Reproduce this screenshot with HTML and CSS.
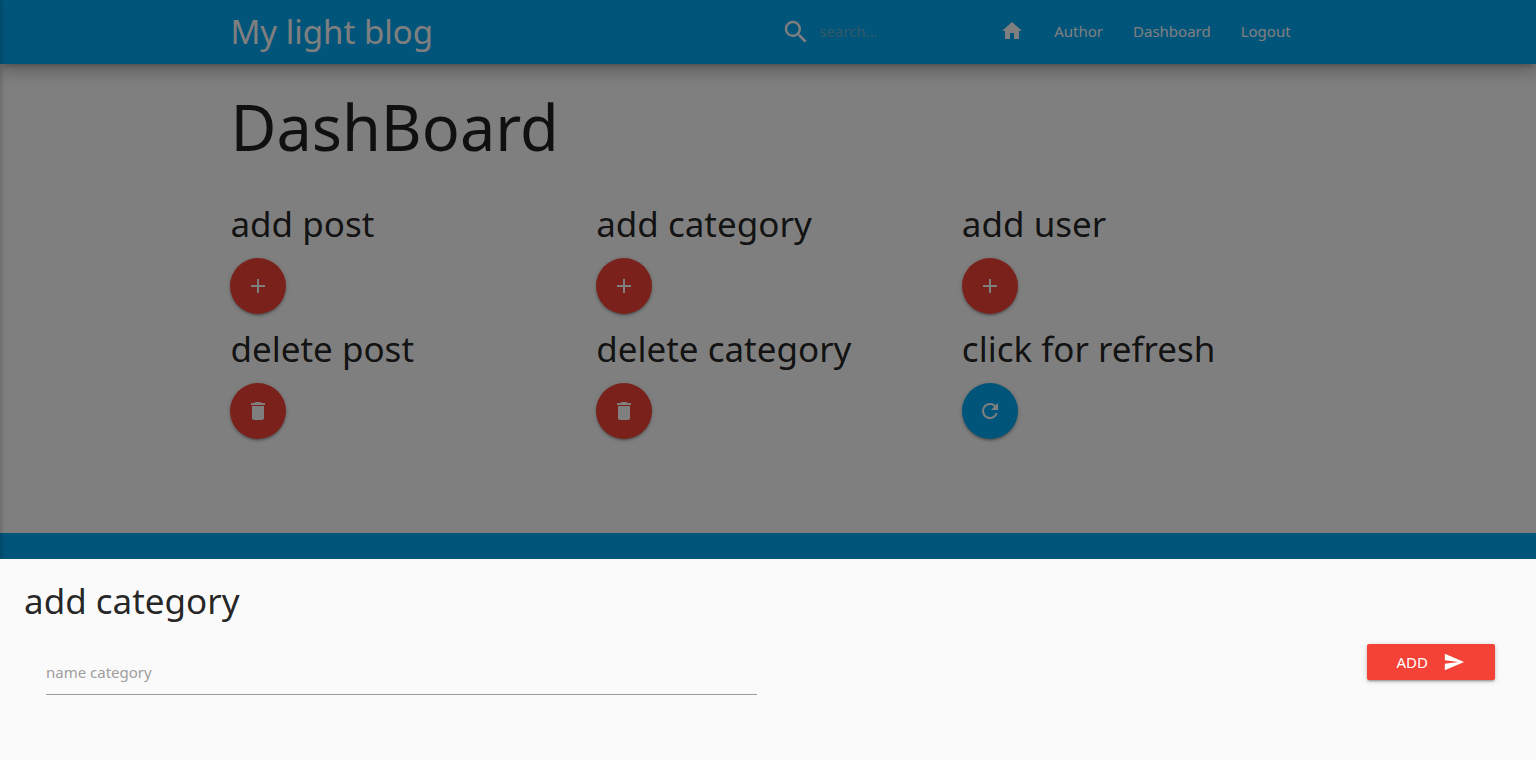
FILE: index.html
```
<!DOCTYPE html>
<html lang="en">
<head>
<meta charset="utf-8">
<meta name="viewport" content="width=device-width, initial-scale=1">
<title>My light blog</title>
<link rel="stylesheet" href="styles.css">
</head>
<body>
<div class="page">
  <header class="navbar">
    <div class="container navbar-inner">
      <a class="brand" href="#">My light blog</a>
      <form class="search">
        <label for="search" aria-label="Search">
          <svg class="icon icon-large" viewBox="0 0 24 24"><path d="M15.5 14h-.79l-.28-.27A6.47 6.47 0 0 0 16 9.5 6.5 6.5 0 1 0 9.5 16c1.61 0 3.09-.59 4.23-1.57l.27.28v.79l5 4.99L20.49 19l-4.99-5zm-6 0C7.01 14 5 11.99 5 9.5S7.01 5 9.5 5 14 7.01 14 9.5 11.99 14 9.5 14z"/></svg>
        </label>
        <input id="search" type="search" placeholder="search...">
      </form>
      <nav class="menu">
        <a href="#" aria-label="Home"><svg class="icon" viewBox="0 0 24 24"><path d="M10 20v-6h4v6h5v-8h3L12 3 2 12h3v8z"/></svg></a>
        <a href="#">Author</a>
        <a href="#">Dashboard</a>
        <a href="#">Logout</a>
      </nav>
    </div>
  </header>

  <main class="container">
    <h1 class="title">DashBoard</h1>
    <div class="actions">
      <section class="action">
        <h2 class="heading">add post</h2>
        <button class="round" type="button" aria-label="add post"><svg class="icon" viewBox="0 0 24 24"><path d="M19 13h-6v6h-2v-6H5v-2h6V5h2v6h6v2z"/></svg></button>
      </section>
      <section class="action">
        <h2 class="heading">add category</h2>
        <button class="round" type="button" aria-label="add category"><svg class="icon" viewBox="0 0 24 24"><path d="M19 13h-6v6h-2v-6H5v-2h6V5h2v6h6v2z"/></svg></button>
      </section>
      <section class="action">
        <h2 class="heading">add user</h2>
        <button class="round" type="button" aria-label="add user"><svg class="icon" viewBox="0 0 24 24"><path d="M19 13h-6v6h-2v-6H5v-2h6V5h2v6h6v2z"/></svg></button>
      </section>
      <section class="action">
        <h2 class="heading">delete post</h2>
        <button class="round" type="button" aria-label="delete post"><svg class="icon" viewBox="0 0 24 24"><path d="M6 19c0 1.1.9 2 2 2h8c1.1 0 2-.9 2-2V7H6v12zM19 4h-3.5l-1-1h-5l-1 1H5v2h14V4z"/></svg></button>
      </section>
      <section class="action">
        <h2 class="heading">delete category</h2>
        <button class="round" type="button" aria-label="delete category"><svg class="icon" viewBox="0 0 24 24"><path d="M6 19c0 1.1.9 2 2 2h8c1.1 0 2-.9 2-2V7H6v12zM19 4h-3.5l-1-1h-5l-1 1H5v2h14V4z"/></svg></button>
      </section>
      <section class="action">
        <h2 class="heading">click for refresh</h2>
        <button class="round round-blue" type="button" aria-label="refresh"><svg class="icon" viewBox="0 0 24 24"><path d="M17.65 6.35A7.96 7.96 0 0 0 12 4a8 8 0 1 0 7.73 10h-2.08A6 6 0 1 1 12 6c1.66 0 3.14.69 4.22 1.78L13 11h7V4l-2.35 2.35z"/></svg></button>
      </section>
    </div>
  </main>
  <footer class="footer"></footer>
</div>
<div class="drawer"></div>
<div class="overlay"></div>

<div class="sheet" role="dialog" aria-labelledby="sheet-title">
  <h2 class="heading" id="sheet-title">add category</h2>
  <form class="sheet-form">
    <div class="field">
      <input id="name" type="text" placeholder="name category" aria-label="name category">
    </div>
    <button class="submit" type="submit">ADD
      <svg class="icon" viewBox="0 0 24 24"><path d="M2.01 21L23 12 2.01 3 2 10l15 2-15 2z"/></svg>
    </button>
  </form>
</div>
</body>
</html>
```
FILE: styles.css
```
* {
  box-sizing: border-box;
}

body {
  margin: 0;
  color: rgba(0, 0, 0, 0.87);
  background: #fff;
  font-family: "Noto Sans", "Open Sans", sans-serif;
  font-size: 15px;
  line-height: 24px;
}

button,
input {
  font: inherit;
}

a {
  color: inherit;
  text-decoration: none;
}

.page {
  display: flex;
  flex-direction: column;
  height: 100vh;
  overflow: hidden;
}

.container {
  width: 70%;
  margin: 0 auto;
}

.icon {
  display: block;
  width: 24px;
  height: 24px;
  fill: currentColor;
}

.icon-large {
  width: 30px;
  height: 30px;
}

.navbar {
  flex: none;
  color: #fff;
  background: #03a9f4;
  box-shadow: 0 8px 17px 2px rgba(0, 0, 0, 0.14), 0 3px 14px 2px rgba(0, 0, 0, 0.12), 0 5px 5px -3px rgba(0, 0, 0, 0.2);
}

.navbar-inner {
  display: flex;
  align-items: center;
  height: 64px;
}

.brand {
  font-size: 33px;
  line-height: 60px;
}

.search {
  display: flex;
  align-items: center;
  gap: 8px;
  margin-left: auto;
}

.search input {
  width: 166px;
  padding: 0 0 2px;
  border: 0;
  outline: 0;
  color: #fff;
  background: none;
}

.search input::placeholder {
  color: #68b2d0;
  opacity: 1;
}

.menu {
  display: flex;
  align-items: center;
  padding-bottom: 2px;
}

.menu a {
  padding: 0 15px;
}

.title {
  margin: 26px 0 40px;
  font-size: 63px;
  font-weight: 400;
  line-height: 74px;
}

.actions {
  display: grid;
  grid-template-columns: repeat(3, 1fr);
  gap: 15px 0;
  margin-right: -22px;
}

.heading {
  margin: 0 0 14px;
  font-size: 35px;
  font-weight: 400;
  line-height: 40px;
}

.round {
  display: grid;
  place-items: center;
  width: 56px;
  height: 56px;
  padding: 0;
  border: 0;
  border-radius: 50%;
  color: #fff;
  background: #f44336;
  box-shadow: 0 2px 2px rgba(0, 0, 0, 0.14), 0 3px 1px -2px rgba(0, 0, 0, 0.12), 0 1px 5px rgba(0, 0, 0, 0.2);
}

.round-blue {
  background: #03a9f4;
}

.footer {
  flex: 1 0 auto;
  margin-top: 94px;
  background: #03a9f4;
}

.drawer {
  position: fixed;
  inset: 0 100% 0 -300px;
  box-shadow: 0 0 6px rgba(0, 0, 0, 0.3);
}

.overlay {
  position: fixed;
  inset: 0;
  background: rgba(0, 0, 0, 0.5);
}

.sheet {
  position: fixed;
  inset: auto 0 0;
  padding: 22px 24px 65px;
  background: #fafafa;
}

.sheet-form {
  display: grid;
  grid-template-columns: 1fr 1fr;
  padding: 9px 11px 0;
}

.field {
  padding: 0 11px;
}

.field input {
  display: block;
  width: 100%;
  height: 51px;
  padding: 6px 0 0;
  border: 0;
  border-bottom: 1px solid #9e9e9e;
  outline: 0;
  background: none;
}

.field input::placeholder {
  color: #9e9e9e;
  opacity: 1;
}

.submit {
  display: flex;
  align-items: center;
  justify-self: end;
  gap: 15px;
  height: 36px;
  margin-right: 6px;
  padding: 0 30px;
  border: 0;
  border-radius: 2px;
  color: #fff;
  background: #f44336;
  box-shadow: 0 2px 2px rgba(0, 0, 0, 0.14), 0 3px 1px -2px rgba(0, 0, 0, 0.12), 0 1px 5px rgba(0, 0, 0, 0.2);
}

.submit .icon {
  width: 22px;
  height: 22px;
}
```
